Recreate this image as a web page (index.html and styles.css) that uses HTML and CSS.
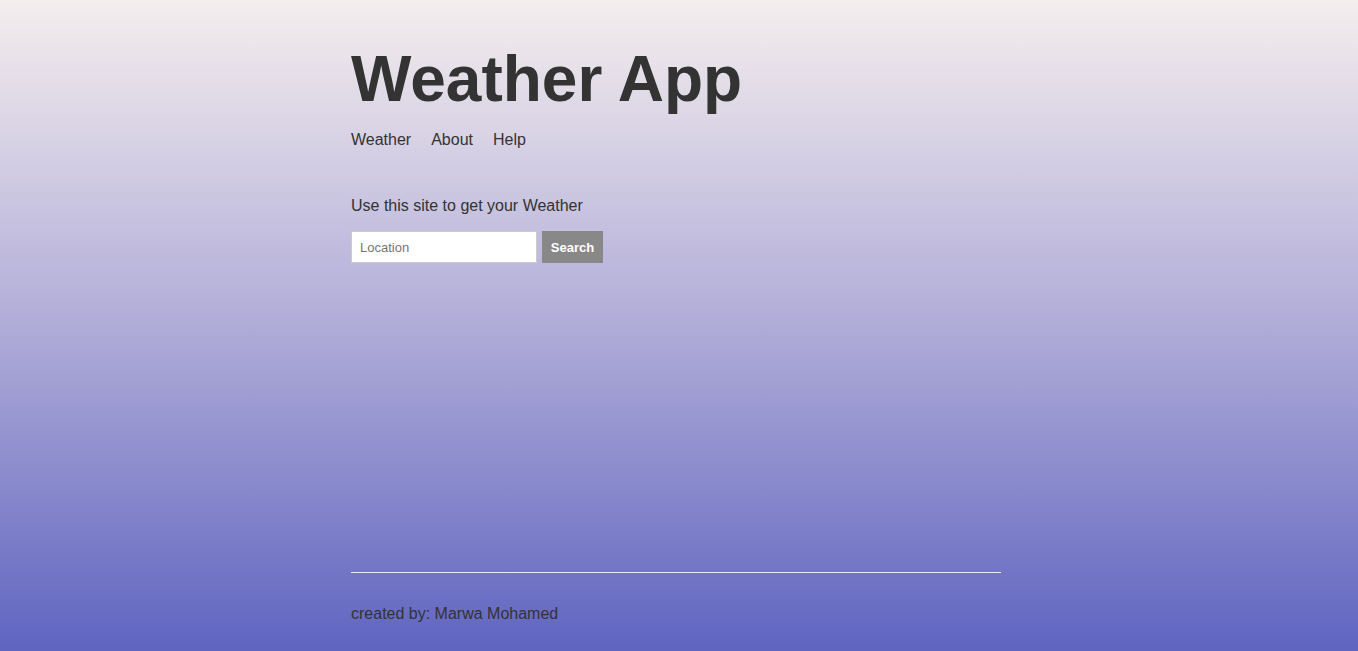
FILE: index.html
```html
<!DOCTYPE html>
<html lang="en">
<head>
<meta charset="utf-8">
<title>Weather App</title>
<link rel="stylesheet" href="styles.css">
</head>
<body>
<div class="page">
  <header class="header">
    <h1 class="title">Weather App</h1>
    <nav class="nav">
      <a class="nav-link" href="#">Weather</a>
      <a class="nav-link" href="#">About</a>
      <a class="nav-link" href="#">Help</a>
    </nav>
  </header>
  <main class="main">
    <p class="intro">Use this site to get your Weather</p>
    <form class="search-form">
      <input class="search-input" type="text" placeholder="Location">
      <button class="search-button" type="button">Search</button>
    </form>
  </main>
  <footer class="footer">
    <p class="credit">created by: Marwa Mohamed</p>
  </footer>
</div>
</body>
</html>
```

FILE: styles.css
```css
html, body {
  margin: 0;
  padding: 0;
}

body {
  min-height: 100vh;
  background: linear-gradient(to bottom, #f5eeee 0%, #b0acd8 50%, #5f64c0 100%);
  color: #333333;
  font-family: "Liberation Sans", Arial, sans-serif;
}

.page {
  box-sizing: border-box;
  width: 656px;
  padding-right: 6px;
  margin: 0 auto;
  min-height: 100vh;
  display: flex;
  flex-direction: column;
}

.title {
  margin: 42px 0 15px;
  font-size: 64px;
  font-weight: bold;
  line-height: normal;
  color: #333333;
}

.nav {
  display: flex;
  gap: 20px;
  font-size: 16px;
  line-height: normal;
}

.nav-link {
  color: #333333;
  text-decoration: none;
}

.main {
  flex: 1;
  padding-top: 48px;
}

.intro {
  margin: 0 0 16px;
  font-size: 16px;
  line-height: normal;
}

.search-form {
  display: flex;
  gap: 5px;
}

.search-input {
  box-sizing: border-box;
  width: 186px;
  height: 32px;
  padding: 0 8px;
  border: 1px solid #cccccc;
  background: #ffffff;
  font-family: "Liberation Sans", Arial, sans-serif;
  font-size: 13px;
  color: #333333;
  outline: none;
}

.search-input::placeholder {
  color: #757575;
}

.search-button {
  box-sizing: border-box;
  width: 61px;
  height: 32px;
  padding: 0;
  border: none;
  background: #888888;
  color: #ffffff;
  font-family: "Liberation Sans", Arial, sans-serif;
  font-size: 13px;
  font-weight: bold;
  cursor: pointer;
}

.footer {
  border-top: 1px solid #eeeeee;
  padding: 32px 0 28px;
}

.credit {
  margin: 0;
  font-size: 16px;
  line-height: normal;
}
```
